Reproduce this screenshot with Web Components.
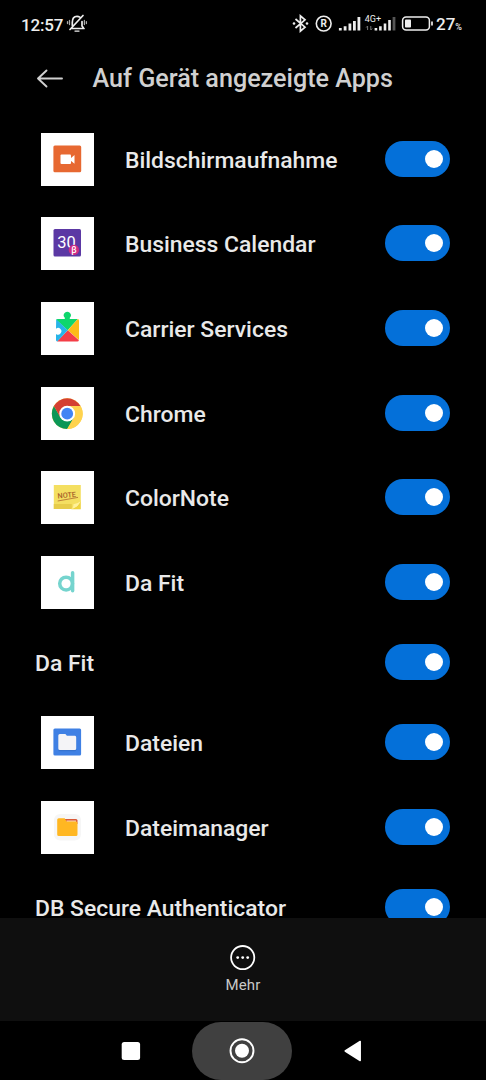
<!DOCTYPE html>
<html lang="de">
<head>
<meta charset="utf-8">
<title>Auf Gerät angezeigte Apps</title>
<style>
html,body{margin:0;height:100%;background:#000;overflow:hidden}
body{font-family:Roboto,"Noto Sans",sans-serif;color:#e9e9e9}
</style>
</head>
<body>
<phone-screen></phone-screen>
<script>
const define = (name, html) => customElements.define(name, class extends HTMLElement {
  constructor() {
    super();
    const t = document.createElement('template');
    t.innerHTML = html;
    this.attachShadow({mode: 'open'}).append(t.content.cloneNode(true));
  }
});

define('status-bar', `<style>
:host{display:flex;box-sizing:border-box;height:48px;padding:0 24px 0 21px;align-items:center;justify-content:space-between;color:#eee;font-weight:500}
div{display:flex;align-items:center}
svg{display:block}
.time{font-size:17px;line-height:20px;letter-spacing:-.2px;width:43px;white-space:nowrap;margin-top:2px}
.pct{font-size:17px;line-height:20px;margin:2px 0 0 2px;white-space:nowrap}
.pct small{font-size:9px;font-weight:500}
</style>
<div><span class="time">12:57</span>
<svg width="24" height="24" viewBox="64 13 24 24" fill="none" stroke="#eee" stroke-width="1.7" stroke-linecap="round"><path d="M71.5 29.5H84M72.3 26.5V23.5Q72.3 17.3 77 17.3q1.6 0 2.8.8M82 22.5V27l1.5 2M70 30.5 83 16.5"/><path d="M75 32.1h4" stroke-width="1.4"/><path d="M69.5 21.5v4M67.5 22.7v1.8M84.4 21.5v4M86.4 22.7v1.8" stroke="#aaa" stroke-width="1.3"/></svg></div>
<div><svg width="142" height="26" viewBox="292 12 142 26" fill="none" stroke="#eee">
<path d="m295.5 20 9.5 8.2-4.6 4V16.8l4.6 4-9.5 8.2" stroke-width="1.7"/><g fill="#eee" stroke="none"><circle cx="294" cy="24.5" r="1.3"/><circle cx="307" cy="24.5" r="1.3"/></g>
<circle cx="323.7" cy="24.6" r="7.4" stroke-width="1.6"/>
<text x="323.8" y="28.3" text-anchor="middle" fill="#eee" stroke="none" font-size="10" font-weight="700">R</text>
<path d="M340.3 31.5v-2.4M345.1 31.5v-4.3M349.9 31.5v-7M354.4 31.5v-9.5M358.9 31.5V18" stroke-width="2.8"/>
<text x="364.8" y="23" fill="#eee" stroke="none" font-size="9" font-weight="400" textLength="16.3">4G+</text>
<path d="M367.6 31v-4m-1.4 1.5 1.4-1.5M370.8 27v4m1.4-1.5-1.4 1.5" stroke="#777" stroke-width="1"/>
<path d="M375.9 31.5v-2.6M380.4 31.5v-4.3M385 31.5v-7M389.5 31.5V21" stroke-width="2.6"/><path d="M394 31.5V18" stroke="#555" stroke-width="2.8"/>
<rect x="402.6" y="18.1" width="26.8" height="12.8" rx="3.5" stroke-width="1.5"/><rect x="405" y="20.5" width="6" height="8" rx=".8" fill="#eee" stroke="none"/><path d="M432 22.5v4" stroke-width="1.7"/></svg>
<span class="pct">27<small>%</small></span></div>`);

define('page-header', `<style>
:host{display:flex;height:69px;align-items:center;color:#d0d0d0}
svg{display:block;margin:-8px 0 0 36px}
h1{font-size:25.15px;font-weight:500;line-height:32px;margin:-7px 0 0 28.5px;white-space:nowrap}
</style><svg width="28" height="24" viewBox="36 66 28 24" fill="none" stroke="#d0d0d0" stroke-width="1.9" stroke-linecap="round" stroke-linejoin="round"><path d="M62 77.5H38M46.5 69.5l-8.5 8 8.5 8"/></svg><h1><slot></slot></h1>`);

define('toggle-switch', `<style>
:host{display:flex;box-sizing:border-box;width:64.5px;height:36px;border-radius:18px;background:#0470d9;align-items:center;justify-content:flex-end;padding-right:7px;margin-top:-1px}
i{width:18px;height:18px;border-radius:50%;background:#fff}
</style><i></i>`);

define('app-row', `<style>
:host{display:flex;box-sizing:border-box;flex:none;height:84.6px;padding:0 36.5px 0 41px;align-items:center}
:host([plain]){height:75.6px;padding-left:35px}
.tile{width:53px;height:53px;background:#fff;margin-right:31px;flex:none}
:host([plain]) .tile{display:none}
.name{flex:1;font-size:22.9px;line-height:30px;font-weight:500;white-space:nowrap;margin-top:3px}
</style><div class="tile"><slot name="icon"></slot></div><span class="name"><slot></slot></span><toggle-switch></toggle-switch>`);

const art = {
record: `<rect x="12.4" y="12.5" width="27.8" height="26.7" rx="1.5" fill="#e76831"/><rect x="19.5" y="21.6" width="10.5" height="9.4" rx="1" fill="#fff"/><path d="m29.5 25.5 4-3.5v8.8l-4-3.4z" fill="#fff"/>`,
calendar: `<rect x="12.5" y="12" width="27.5" height="27.5" rx="1.5" fill="#5b38a4"/><text x="16.2" y="31.3" font-size="16.5" fill="#fff" textLength="18.5" lengthAdjust="spacingAndGlyphs">30</text><circle cx="32.9" cy="32.9" r="5.2" fill="#cf2b82"/><text x="32.9" y="35.6" font-size="9" font-weight="500" text-anchor="middle" fill="#fff">β</text>`,
puzzle: `<path d="M16.5 17h20.3L26.7 28.2 15 17.8z" fill="#0ed66c"/><path d="M23.8 18v-2.2a3.5 3.5 0 1 1 5 0V18z" fill="#0ed66c"/><path d="M36.8 17q1.2.3 1.2 1.5V38l-11.2-9.8z" fill="#fdbb18"/><path d="m26.7 28.2 11.2 10q-.3 1.2-1.5 1.2H16z" fill="#f43d47"/><path d="M15.2 17.2 26.7 28.2 16.2 39.4q-1.2-.2-1.2-1.5v-6a3.3 3.3 0 1 0 0-5.2z" fill="#27b4e8"/>`,
chrome: `<circle cx="26.2" cy="26.7" r="15.4" fill="#ffd34e"/><path d="M26.2 26.7 12.9 19a15.4 15.4 0 0 1 26.6 0z" fill="#d43f32"/><path d="M26.2 26.7 33 30.5 26.2 42.1A15.4 15.4 0 0 1 12.9 19L19.6 30.5z" fill="#0b9756"/><path d="M26.2 18.9h13.3a15.4 15.4 0 0 1-13.3 23.2L33 30.5z" fill="#ffd34e"/><path d="m12.9 19 6.6 11.5L26 26V19z" fill="#d43f32"/><circle cx="26.2" cy="26.7" r="7.9" fill="#fff"/><circle cx="26.2" cy="26.7" r="5.9" fill="#4285f4"/>`,
note: `<path d="M12.8 14h27v16.5L32 38H12.8z" fill="#f4df61"/><path d="M12.8 33h18v5h-18z" fill="#e7cc4a"/><path d="M39.8 29v9.2H30q7-1.4 9.8-9.2z" fill="#efd33e"/><path d="M30 38.2q7-2.2 9.8-8.2-3.2 3-7.4 3.2.3 3.3-2.4 5z" fill="#fff199"/><text x="16.5" y="26.7" font-size="7.4" fill="#a7622b" font-weight="500" textLength="18.5" lengthAdjust="spacingAndGlyphs" transform="rotate(-5 26 24)">NOTE</text><path d="m16.7 30 20.3-3.6" stroke="#bd803a" stroke-width="1"/>`,
dafit: `<g fill="none" stroke="#75d4ce" stroke-width="3.5" stroke-linecap="round"><circle cx="25.1" cy="27.6" r="6.4"/><path d="M31.6 16.8v18"/></g>`,
files: `<rect x="12.4" y="12.5" width="27.7" height="27" rx="1.5" fill="#3f80e4"/><path d="M17.3 20q0-1.8 1.5-1.8h5.6l1.5 2H34q1.2 0 1.2 1.5v12q0 1.5-1.5 1.5H18.8q-1.5 0-1.5-1.5z" fill="#245ba9" opacity=".35"/><path d="M17.3 19.5q0-1.5 1.5-1.5h5.6l1.5 1.7H34q1.2 0 1.2 1.5v11.3q0 1.5-1.5 1.5H18.8q-1.5 0-1.5-1.5z" fill="#f4f4f7"/>`,
manager: `<rect x="13" y="13" width="27" height="26.5" rx="6" fill="#f6f6f6"/><path d="M23 18h12q1.5 0 1.5 1.6V23H23z" fill="#d95a39"/><path d="M25.5 19.6h9.5v1.2h-9.5z" fill="#fff0dd"/><path d="M16.2 18.8q0-1.5 1.5-1.5h6l1.8 3.2H35q1.5 0 1.5 1.5v11.5q0 1.5-1.5 1.5H17.7q-1.5 0-1.5-1.5z" fill="#ffb722"/>`
};
customElements.define('app-icon', class extends HTMLElement {
  connectedCallback() {
    this.attachShadow({mode: 'open'}).innerHTML = `<style>:host,svg{display:block}</style><svg width="53" height="53" viewBox="0 0 53 53">${art[this.getAttribute('kind')]}</svg>`;
  }
});

define('action-bar', `<style>
:host{display:flex;flex:none;flex-direction:column;height:103px;background:#0f0f0f;align-items:center;color:#c9c9c9;font-size:15px;line-height:18px}
svg{display:block;margin:27px 0 5px}
span{letter-spacing:.15px}
</style><svg width="26" height="26" viewBox="0 0 26 26"><circle cx="12.7" cy="12.6" r="11.6" fill="none" stroke="#fff" stroke-width="1.8"/><g fill="#fff"><circle cx="7.7" cy="12.6" r="1.4"/><circle cx="12.7" cy="12.6" r="1.4"/><circle cx="17.7" cy="12.6" r="1.4"/></g></svg><span><slot></slot></span>`);

define('nav-bar', `<style>
:host{display:flex;flex:none;box-sizing:border-box;height:59px;padding-right:3px;align-items:center;justify-content:center;gap:51px}
svg{display:block;flex:none}
.home{background:#404040;border-radius:29px;width:100px;height:58px;display:grid;place-items:center}
</style><svg width="20" height="20" viewBox="0 0 20 20"><rect x=".7" y="1" width="18.4" height="18" rx="2.5" fill="#fff"/></svg>
<div class="home"><svg width="26" height="26" viewBox="0 0 26 26"><circle cx="13" cy="12.7" r="11.5" fill="none" stroke="#fff" stroke-width="1.9"/><circle cx="13" cy="12.7" r="7" fill="#fff"/></svg></div>
<svg width="20" height="22" viewBox="0 0 20 22"><path d="M2.2 11 17.2 1.5v19z" fill="#fff" stroke="#fff" stroke-width="1.5" stroke-linejoin="round"/></svg>`);

define('phone-screen', `<style>
:host{display:flex;flex-direction:column;width:486px;height:1080px;background:#000}
main{flex:1;min-height:0;overflow:hidden;display:flex;flex-direction:column}
</style>
<status-bar></status-bar>
<page-header>Auf Gerät angezeigte Apps</page-header>
<main>
<app-row><app-icon slot="icon" kind="record"></app-icon>Bildschirmaufnahme</app-row>
<app-row><app-icon slot="icon" kind="calendar"></app-icon>Business Calendar</app-row>
<app-row><app-icon slot="icon" kind="puzzle"></app-icon>Carrier Services</app-row>
<app-row><app-icon slot="icon" kind="chrome"></app-icon>Chrome</app-row>
<app-row><app-icon slot="icon" kind="note"></app-icon>ColorNote</app-row>
<app-row><app-icon slot="icon" kind="dafit"></app-icon>Da Fit</app-row>
<app-row plain>Da Fit</app-row>
<app-row><app-icon slot="icon" kind="files"></app-icon>Dateien</app-row>
<app-row><app-icon slot="icon" kind="manager"></app-icon>Dateimanager</app-row>
<app-row plain>DB Secure Authenticator</app-row>
</main>
<action-bar>Mehr</action-bar>
<nav-bar></nav-bar>`);
</script>
</body>
</html>
